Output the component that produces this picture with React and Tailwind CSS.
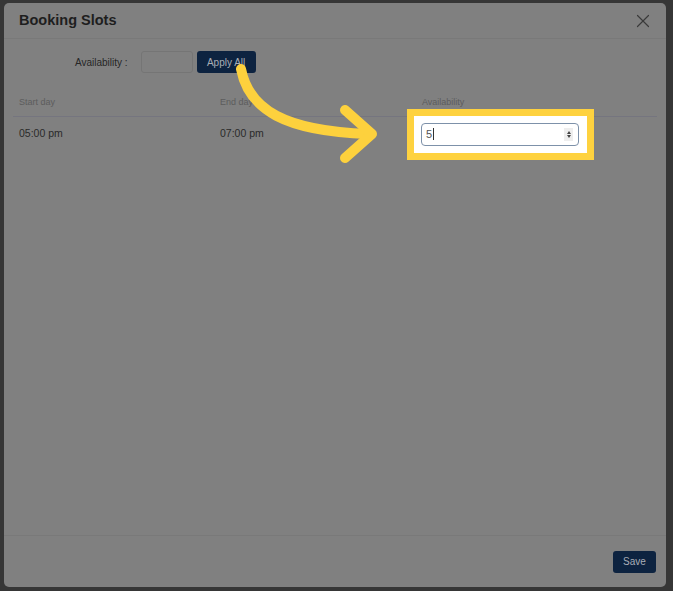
import { X } from "lucide-react";

const rows = [{ start: "05:00 pm", end: "07:00 pm", value: "5" }];

function Arrow() {
  return (
    <svg
      className="pointer-events-none absolute left-0 top-0"
      width="673"
      height="591"
      viewBox="0 0 673 591"
      fill="none"
    >
      <path
        d="M241 69 C 249 110, 285 131, 368 134"
        stroke="#fdd13d"
        strokeWidth="10"
        strokeLinecap="round"
      />
      <path
        d="M345 110 L 372 134 L 345 158"
        stroke="#fdd13d"
        strokeWidth="10"
        strokeLinecap="round"
        strokeLinejoin="round"
      />
    </svg>
  );
}

export default function App() {
  return (
    <div
      className="relative h-[591px] w-[673px] overflow-hidden bg-[#363636] pl-[4px] pt-[3px]"
      style={{ fontFamily: '"Liberation Sans", Arial, sans-serif' }}
    >
      <div className="flex h-[584px] w-[662px] flex-col rounded-[5px] bg-[#808080]">
        {/* header */}
        <div className="flex h-[36px] items-center justify-between border-b border-[#797979] pl-[15px] pr-[12px]">
          <h2 className="text-[14.5px] font-bold text-[#1e1e1e]">Booking Slots</h2>
          <X className="h-[22px] w-[22px] text-[#3a3a3a]" strokeWidth={1.3} />
        </div>

        {/* body */}
        <div className="flex-1 px-[9px]">
          <div className="mt-[12px] flex items-center">
            <span className="ml-[62px] text-[10px] text-[#262626]">Availability :</span>
            <input
              className="ml-[13px] h-[22px] w-[52px] rounded-[3px] border border-[#757575] bg-transparent"
              readOnly
            />
            <button className="ml-[4px] h-[22px] w-[59px] rounded-[3px] bg-[#0d2340] text-[10px] text-[#a9aeb6]">
              Apply All
            </button>
          </div>

          <table className="mt-[17px] w-[644px] border-collapse text-left">
            <thead>
              <tr className="border-b border-[#75757f]">
                <th className="h-[26px] w-[201px] pl-[6px] text-[9px] font-normal text-[#5c5c5c]">
                  Start day
                </th>
                <th className="w-[202px] pl-[6px] text-[9px] font-normal text-[#5c5c5c]">
                  End day
                </th>
                <th className="pl-[6px] text-[9px] font-normal text-[#5c5c5c]">Availability</th>
              </tr>
            </thead>
            <tbody>
              {rows.map((r) => (
                <tr key={r.start}>
                  <td className="h-[36px] pl-[6px] text-[10.5px] text-[#2a2a2a]">{r.start}</td>
                  <td className="pl-[6px] text-[10.5px] text-[#2a2a2a]">{r.end}</td>
                  <td className="pl-[5px]">
                    <div className="relative w-[158px]">
                      <div className="absolute -bottom-[14px] -left-[14px] -right-[15px] -top-[14px] border-[7px] border-[#fed23f] bg-white" />
                      <div className="relative flex h-[23px] items-center rounded-[4px] border border-[#7d91a9] bg-white pl-[4px] pr-[5px]">
                        <span className="text-[11px] text-[#555]">{r.value}</span>
                        <span className="ml-[1px] h-[12px] w-px bg-[#333]" />
                        <div className="ml-auto flex h-[13px] w-[9px] flex-col items-center justify-center gap-[1px] bg-[#eeeeee]">
                          <span className="h-0 w-0 border-x-[2.5px] border-b-[3px] border-x-transparent border-b-[#444]" />
                          <span className="h-0 w-0 border-x-[2.5px] border-t-[3px] border-x-transparent border-t-[#444]" />
                        </div>
                      </div>
                    </div>
                  </td>
                </tr>
              ))}
            </tbody>
          </table>
        </div>

        {/* footer */}
        <div className="flex h-[52px] items-center justify-end border-t border-[#797979] pr-[10px]">
          <button className="h-[22px] w-[43px] rounded-[3px] bg-[#0d2340] text-[10px] text-[#a9aeb6]">
            Save
          </button>
        </div>
      </div>
      <Arrow />
    </div>
  );
}
